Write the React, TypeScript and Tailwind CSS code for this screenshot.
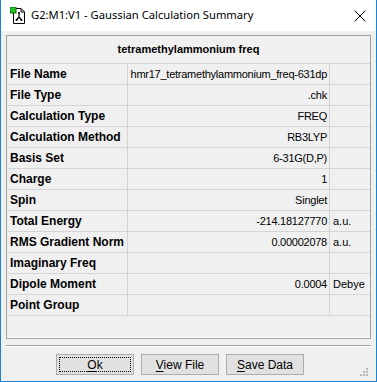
import React from "react";

const rows: { label: string; value: string; unit: string }[] = [
  { label: "File Name", value: "hmr17_tetramethylammonium_freq-631dp", unit: "" },
  { label: "File Type", value: ".chk", unit: "" },
  { label: "Calculation Type", value: "FREQ", unit: "" },
  { label: "Calculation Method", value: "RB3LYP", unit: "" },
  { label: "Basis Set", value: "6-31G(D,P)", unit: "" },
  { label: "Charge", value: "1", unit: "" },
  { label: "Spin", value: "Singlet", unit: "" },
  { label: "Total Energy", value: "-214.18127770", unit: "a.u." },
  { label: "RMS Gradient Norm", value: "0.00002078", unit: "a.u." },
  { label: "Imaginary Freq", value: "", unit: "" },
  { label: "Dipole Moment", value: "0.0004", unit: "Debye" },
  { label: "Point Group", value: "", unit: "" },
];

function TitleIcon() {
  return (
    <svg width="16" height="17" viewBox="0 0 16 17">
      <path d="M3.5 1.5 H11 L14.5 5 V16.5 H3.5 Z" fill="#fff" stroke="#000" />
      <path d="M11 1.5 V5 H14.5" fill="none" stroke="#000" />
      <rect x="0" y="0" width="6" height="6" fill="#22c322" stroke="#0a6a0a" strokeWidth="1" />
      <path d="M9 6 V10 M9 10 L6.5 13 M9 10 L11.5 13" stroke="#000" strokeWidth="1.2" fill="none" />
      <circle cx="9" cy="6" r="1" fill="#000" />
      <circle cx="6.5" cy="13" r="1" fill="#000" />
      <circle cx="11.5" cy="13" r="1" fill="#000" />
    </svg>
  );
}

function Btn({ first, rest, focus }: { first: string; rest: string; focus?: boolean }) {
  return (
    <div className="relative w-[78px] h-[21px] border border-[#adadad] bg-[#e1e1e1] flex items-center justify-center text-[12px] text-black">
      {focus && <div className="absolute inset-[2px] border border-dotted border-black" />}
      <span>
        <span className="underline underline-offset-2">{first}</span>
        {rest}
      </span>
    </div>
  );
}

export default function App() {
  return (
    <div
      className="w-[377px] h-[382px] flex flex-col border-l border-r border-b border-[#1883d7] bg-[#f0f0f0] overflow-hidden"
      style={{ fontFamily: "'Liberation Sans', Arial, sans-serif" }}
    >
      {/* Title bar */}
      <div className="h-[31px] bg-white flex items-center pl-[9px] pr-[9px] shrink-0">
        <TitleIcon />
        <span
          className="ml-[5px] text-[11.2px] text-black flex-1"
          style={{ fontFamily: "'Noto Sans', 'Open Sans', sans-serif" }}
        >
          G2:M1:V1 - Gaussian Calculation Summary
        </span>
        <svg width="12" height="12" viewBox="0 0 12 12" className="mr-[1px]">
          <path d="M0.5 0.5 L11.5 11.5 M11.5 0.5 L0.5 11.5" stroke="#000" strokeWidth="1" />
        </svg>
      </div>

      {/* Content */}
      <div className="flex-1 flex flex-col px-[5px] pt-[4px] relative">
        <div className="border border-[#a0a0a0] h-[304px] flex flex-col">
          <div className="h-[28px] border-b border-[#d4d4d4] flex items-center justify-center font-bold text-[11px] text-black">
            tetramethylammonium freq
          </div>
          {rows.map((r) => (
            <div key={r.label} className="h-[21px] border-b border-[#d4d4d4] flex text-black">
              <div className="w-[121px] border-r border-[#d4d4d4] pl-[3px] flex items-center font-bold text-[12px] whitespace-nowrap">
                {r.label}
              </div>
              <div className="w-[202px] border-r border-[#d4d4d4] pr-[2px] flex items-center justify-end text-[11px] tracking-[-0.25px] whitespace-nowrap">
                {r.value}
              </div>
              <div className="flex-1 pl-[3px] flex items-center text-[11px] whitespace-nowrap">{r.unit}</div>
            </div>
          ))}
          <div className="flex-1 border-b border-white" />
        </div>

        <div className="mt-[6px] h-[2px] border-t border-[#a0a0a0] border-b border-b-white" />

        <div className="mt-[7px] flex justify-start gap-[7px] pl-[50px]">
          <Btn first="O" rest="k" focus />
          <Btn first="V" rest="iew File" />
          <Btn first="S" rest="ave Data" />
        </div>

        {/* size grip */}
        <svg className="absolute right-[8px] bottom-[5px]" width="8" height="8" viewBox="0 0 8 8">
          <rect x="6" y="0" width="2" height="2" fill="#b8b8b8" />
          <rect x="3" y="3" width="2" height="2" fill="#b8b8b8" />
          <rect x="6" y="3" width="2" height="2" fill="#b8b8b8" />
          <rect x="0" y="6" width="2" height="2" fill="#b8b8b8" />
          <rect x="3" y="6" width="2" height="2" fill="#b8b8b8" />
          <rect x="6" y="6" width="2" height="2" fill="#b8b8b8" />
        </svg>
      </div>
    </div>
  );
}
